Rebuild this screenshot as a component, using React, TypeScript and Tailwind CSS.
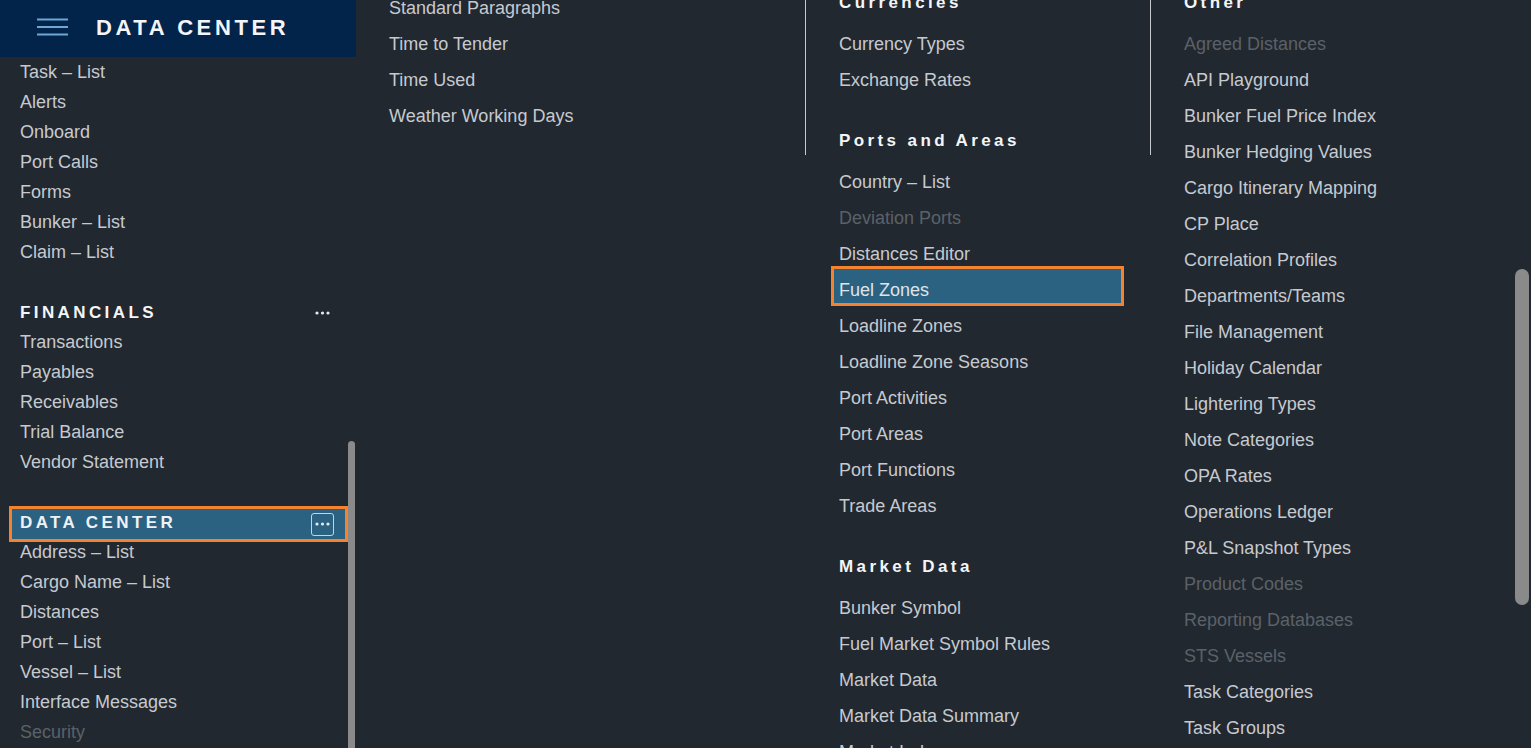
import React from "react";

type Item = { label: string; disabled?: boolean; active?: boolean };

const sidebarTop: Item[] = [
  { label: "Task – List" },
  { label: "Alerts" },
  { label: "Onboard" },
  { label: "Port Calls" },
  { label: "Forms" },
  { label: "Bunker – List" },
  { label: "Claim – List" },
];

const financials: Item[] = [
  { label: "Transactions" },
  { label: "Payables" },
  { label: "Receivables" },
  { label: "Trial Balance" },
  { label: "Vendor Statement" },
];

const dataCenter: Item[] = [
  { label: "Address – List" },
  { label: "Cargo Name – List" },
  { label: "Distances" },
  { label: "Port – List" },
  { label: "Vessel – List" },
  { label: "Interface Messages" },
  { label: "Security", disabled: true },
];

const col1: Item[] = [
  { label: "Standard Paragraphs" },
  { label: "Time to Tender" },
  { label: "Time Used" },
  { label: "Weather Working Days" },
];

const col2: { title: string; items: Item[] }[] = [
  { title: "Currencies", items: [{ label: "Currency Types" }, { label: "Exchange Rates" }] },
  {
    title: "Ports and Areas",
    items: [
      { label: "Country – List" },
      { label: "Deviation Ports", disabled: true },
      { label: "Distances Editor" },
      { label: "Fuel Zones", active: true },
      { label: "Loadline Zones" },
      { label: "Loadline Zone Seasons" },
      { label: "Port Activities" },
      { label: "Port Areas" },
      { label: "Port Functions" },
      { label: "Trade Areas" },
    ],
  },
  {
    title: "Market Data",
    items: [
      { label: "Bunker Symbol" },
      { label: "Fuel Market Symbol Rules" },
      { label: "Market Data" },
      { label: "Market Data Summary" },
      { label: "Market Index" },
    ],
  },
];

const col3: Item[] = [
  { label: "Agreed Distances", disabled: true },
  { label: "API Playground" },
  { label: "Bunker Fuel Price Index" },
  { label: "Bunker Hedging Values" },
  { label: "Cargo Itinerary Mapping" },
  { label: "CP Place" },
  { label: "Correlation Profiles" },
  { label: "Departments/Teams" },
  { label: "File Management" },
  { label: "Holiday Calendar" },
  { label: "Lightering Types" },
  { label: "Note Categories" },
  { label: "OPA Rates" },
  { label: "Operations Ledger" },
  { label: "P&L Snapshot Types" },
  { label: "Product Codes", disabled: true },
  { label: "Reporting Databases", disabled: true },
  { label: "STS Vessels", disabled: true },
  { label: "Task Categories" },
  { label: "Task Groups" },
];

function Dots({ boxed }: { boxed?: boolean }) {
  return (
    <div
      className={
        "flex h-[23px] w-[23px] items-center justify-center rounded-[3px] border " +
        (boxed ? "border-[#c9d3dc]" : "border-transparent")
      }
    >
      <svg width="15" height="4" viewBox="0 0 15 4">
        <circle cx="2" cy="2" r="1.6" fill="#e6eaef" />
        <circle cx="7.5" cy="2" r="1.6" fill="#e6eaef" />
        <circle cx="13" cy="2" r="1.6" fill="#e6eaef" />
      </svg>
    </div>
  );
}

function SideItem({ item }: { item: Item }) {
  return (
    <div
      className={
        "flex h-[30px] items-center pl-[20px] text-[18px] " +
        (item.disabled ? "text-[#5b6168]" : "text-[#c6cad0]")
      }
    >
      {item.label}
    </div>
  );
}

function MainItem({ item }: { item: Item }) {
  if (item.active) {
    return (
      <div className="-ml-[8px] -mt-[6px] mb-[2px] flex h-[40px] w-[293px] items-center border-[3px] border-[#f5822e] bg-[#2c6281] pl-[5px] pt-[8px] text-[18px] text-[#dfe4ea]">
        {item.label}
      </div>
    );
  }
  return (
    <div
      className={
        "flex h-[36px] items-center whitespace-nowrap text-[18px] " +
        (item.disabled ? "text-[#5b6168]" : "text-[#c6cad0]")
      }
    >
      {item.label}
    </div>
  );
}

function Heading({ title }: { title: string }) {
  return (
    <div className="flex h-[48px] items-center pt-[2px] text-[17px] font-bold tracking-[0.2em] text-[#f3f5f8]">
      {title}
    </div>
  );
}

export default function App() {
  return (
    <div className="flex h-[748px] w-[1531px] overflow-hidden bg-[#22282f] font-['Liberation_Sans',Arial,sans-serif]">
      {/* Sidebar */}
      <aside className="relative flex w-[356px] shrink-0 flex-col overflow-hidden">
        <header className="flex h-[57px] shrink-0 items-center bg-[#03244a] pb-[3px] pl-[37px]">
          <svg width="31" height="18" viewBox="0 0 31 18">
            <rect x="0" y="0.5" width="31" height="2" fill="#6fa6d4" />
            <rect x="0" y="8" width="31" height="2" fill="#6fa6d4" />
            <rect x="0" y="15.5" width="31" height="2" fill="#6fa6d4" />
          </svg>
          <span className="ml-[28px] text-[22px] font-bold tracking-[3.6px] text-[#f3f5f8]">DATA CENTER</span>
        </header>
        <nav className="flex flex-col">
          {sidebarTop.map((it) => (
            <SideItem key={it.label} item={it} />
          ))}
          <div className="mt-[30px] flex h-[30px] items-center justify-between pl-[20px] pr-[22px] pt-[1px]">
            <span className="text-[17px] font-bold tracking-[0.2em] text-[#f3f5f8]">FINANCIALS</span>
            <Dots />
          </div>
          {financials.map((it) => (
            <SideItem key={it.label} item={it} />
          ))}
          <div className="relative z-10 mb-[-5px] ml-[9px] mt-[29px] flex h-[36px] w-[339px] items-center justify-between border-[3px] border-[#f5822e] bg-[#2c6281] pl-[8px] pr-[11px]">
            <span className="-mt-[3px] text-[17px] font-bold tracking-[0.2em] text-[#eef1f5]">DATA CENTER</span>
            <Dots boxed />
          </div>
          {dataCenter.map((it) => (
            <SideItem key={it.label} item={it} />
          ))}
        </nav>
        <div className="absolute left-[348px] top-[441px] h-[400px] w-[7px] rounded-full bg-[#8a8a8a]" />
      </aside>

      {/* Main */}
      <main className="relative flex flex-1 overflow-hidden">
        <section className="-mt-[10px] flex w-[449px] shrink-0 flex-col pl-[33px]">
          {col1.map((it) => (
            <MainItem key={it.label} item={it} />
          ))}
        </section>

        <section className="relative w-[345px] shrink-0 pl-[34px]">
          <div className="absolute left-0 top-0 h-[155px] w-px bg-[#c5c9ce]" />
          <div className="-mt-[22px] flex flex-col gap-[18px]">
            {col2.map((g) => (
              <div key={g.title} className="flex flex-col">
                <Heading title={g.title} />
                {g.items.map((it) => (
                  <MainItem key={it.label} item={it} />
                ))}
              </div>
            ))}
          </div>
        </section>

        <section className="relative flex-1 pl-[34px]">
          <div className="absolute left-0 top-0 h-[155px] w-px bg-[#c5c9ce]" />
          <div className="-mt-[22px] flex flex-col">
            <Heading title="Other" />
            {col3.map((it) => (
              <MainItem key={it.label} item={it} />
            ))}
          </div>
        </section>

        <div className="absolute right-[2px] top-[269px] h-[336px] w-[14px] rounded-full bg-[#8a8a8a]" />
      </main>
    </div>
  );
}
